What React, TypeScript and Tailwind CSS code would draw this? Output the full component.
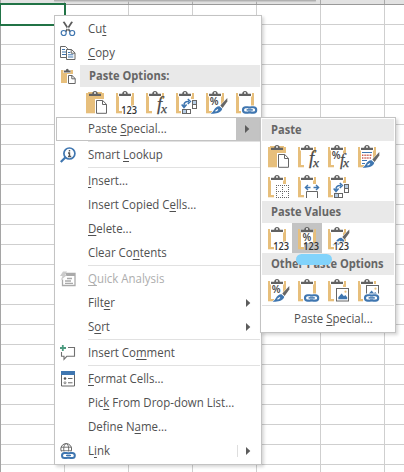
import type { ReactNode } from "react";

type Kind =
  | "paste" | "values" | "formula" | "transpose" | "format" | "link"
  | "formulaNumber" | "sourceFormat" | "noBorders" | "widths"
  | "valuesNumber" | "valuesFormat" | "picture" | "linkedPicture";

const SANS = "font-['Open_Sans','Noto_Sans',sans-serif]";

function Brush({ up = false }: { up?: boolean }) {
  return (
    <g transform={up ? "translate(0 -4.5)" : undefined}>
      <path d="M27.3 11L20.3 18.6L22.6 20.9L27.3 14.5Z" fill="#666" stroke="#fff" strokeWidth="1" paintOrder="stroke" />
      <path d="M19.5 19.2L22.3 21.8C21 26 16 27.2 10.5 26.5C13.5 25 14 22 16 20.5C17.2 19.4 18.5 19 19.5 19.2Z" fill="#3f76b0" stroke="#fff" strokeWidth="1" paintOrder="stroke" />
      <path d="M15.5 24.3l2.5-1.8" stroke="#fff" strokeWidth="1.1" />
    </g>
  );
}

function Chain() {
  return (
    <g fill="none">
      <path d="M11 18.5h17v8.5h-17z" fill="#fff" />
      <rect x="13" y="20.2" width="7.5" height="5.4" rx="2.7" stroke="#3f76b0" strokeWidth="2.1" />
      <rect x="18.8" y="20.2" width="7.4" height="5.4" rx="2.7" stroke="#3f76b0" strokeWidth="2.1" />
      <path d="M16.8 22.9h5.8" stroke="#fff" strokeWidth="2.6" />
      <path d="M16.6 22.9h6.2" stroke="#3f76b0" strokeWidth="1.5" />
    </g>
  );
}

function Numbers() {
  return (
    <text x="11.2" y="26.7" fontSize="9.8" fontWeight="600" fill="#333" stroke="#fff" strokeWidth="1.6" paintOrder="stroke" textLength="15.8" lengthAdjust="spacingAndGlyphs" className={SANS}>123</text>
  );
}

function Percent({ x = 9.8, y = 18.2 }: { x?: number; y?: number }) {
  return <text x={x} y={y} fontSize="10.5" fontWeight="600" fill="#444" textLength="8.8" lengthAdjust="spacingAndGlyphs" className={SANS}>%</text>;
}

function Fx({ small = false }: { small?: boolean }) {
  return (
    <g fontStyle="italic" fill="#484848" stroke="#484848" strokeWidth=".25" className="font-['Liberation_Serif',serif]">
      <text x={small ? 18 : 17} y={small ? 23.5 : 22.8} fontSize={small ? 16 : 18.5}>f</text>
      <text x="21" y="26.3" fontSize="13.5">x</text>
    </g>
  );
}

function Picture({ small = false }: { small?: boolean }) {
  return (
    <g transform={small ? "translate(0 -3)" : undefined}>
      <path d="M13 12h15v15H13z" fill="#fff" />
      <rect x="14.5" y="13.5" width="12" height="12.5" fill="#fff" stroke="#666" />
      <path d="M16.3 24.2v-2l3.3-3.6 2.4 2.6 1.2-1.2 2 2.2v2z" fill="#3f76b0" />
      <circle cx="23.5" cy="16.7" r="1.1" fill="#e7bf7c" />
    </g>
  );
}

function Transpose() {
  return (
    <g>
      <path d="M11 12h16v15H11z" fill="#fff" />
      <g fill="#fff" stroke="#666">
        <rect x="22.5" y="13.5" width="4" height="4" fill="#b5cce4" /><rect x="22.5" y="17.5" width="4" height="4" />
        <rect x="12.5" y="22.5" width="4" height="4" fill="#b5cce4" /><rect x="16.5" y="22.5" width="4" height="4" />
      </g>
      <path d="M14 20v-1.7q0-3.8 4-3.8h1M11.7 17.5L14 20.5l2.6-3M17.8 12l2.6 2.5-2.6 2.5" fill="none" stroke="#3f76b0" strokeWidth="1.5" />
    </g>
  );
}

const overlays: Record<Kind, ReactNode> = {
  paste: <><path d="M15 12h13v15H15z" fill="#fff" /><path d="M16.5 13.5h6.2l3.8 3.8v9h-10zM22.5 13.5v4h4" fill="#fff" stroke="#666" /></>,
  values: <Numbers />,
  formula: <><path d="M15 12h12v15H15z" fill="#fff" /><Fx /></>,
  transpose: <Transpose />,
  format: <><Percent /><Brush /></>,
  link: <Chain />,
  formulaNumber: <><path d="M17 12h10v15H17z" fill="#fff" /><Percent x={9.8} y={17.7} /><Fx small /></>,
  sourceFormat: (
    <>
      <path d="M10 11.5h10M10 19.5h5M10 22.5h3" stroke="#3f76b0" />
      <path d="M10 14.2h10M10 17h9" stroke="#c8584d" strokeWidth="1.5" strokeDasharray="1 .6" />
      <Brush />
    </>
  ),
  noBorders: (
    <>
      <path d="M13 13h14v14H13z" fill="#fff" />
      <path d="M14.5 14v13M20.5 14v13M26.5 14v13M14 14.5h13M14 20.5h13M14 26.5h13" stroke="#666" strokeDasharray="1 1" />
    </>
  ),
  widths: (
    <>
      <path d="M12 13h15v14H12z" fill="#fff" />
      <path d="M13.5 16.5h5M21.5 16.5h5M16 14l-2.6 2.5L16 19M24 14l2.6 2.5L24 19" fill="none" stroke="#3f76b0" strokeWidth="1.4" />
      <path d="M14.5 27v-6.5h11V27" fill="none" stroke="#666" />
    </>
  ),
  valuesNumber: <><Percent x={10.6} y={18} /><text x="11.2" y="26.7" fontSize="9.8" fontWeight="600" fill="#333" textLength="15.8" lengthAdjust="spacingAndGlyphs" className={SANS}>123</text></>,
  valuesFormat: <><Brush up /><Numbers /></>,
  picture: <Picture />,
  linkedPicture: <><Picture small /><Chain /></>,
};

function PasteIcon({ kind, active = false }: { kind: Kind; active?: boolean }) {
  return (
    <button className={active ? "size-[30px] bg-[#c3c3c3]" : "size-[30px]"}>
      <svg width="30" height="30" viewBox="0 0 30 30" aria-label={kind}>
        <path d="M6 6h18v20.3H6z" fill="#e7bf7c" />
        {kind !== "paste" && <path d="M9 9h12v15H9z" fill="#fff" />}
        {kind !== "paste" && <path d="M12 20h13v7H12z" fill={active ? "#c3c3c3" : "#fff"} />}
        <path d="M8 5h14v4.5H8z" fill={kind === "paste" ? "#e7bf7c" : active ? "#c3c3c3" : "#fff"} />
        <path d="M9 9V6.8h3.2C12.4 5 13.4 4 15 4s2.6 1 2.8 2.8H21V9z" fill="#626262" />
        <circle cx="15" cy="6" r=".9" fill="#fff" />
        {overlays[kind]}
      </svg>
    </button>
  );
}

function Label({ text, bold = false }: { text: string; bold?: boolean }) {
  const parts = text.split("_");
  return (
    <span className={bold ? "inline-block origin-left scale-x-[0.925] whitespace-nowrap font-bold text-[#666]" : "inline-block origin-left scale-x-[0.955] whitespace-nowrap"}>
      {parts[0]}
      {parts.length > 1 && <><span className="underline decoration-1 underline-offset-2">{parts[1][0]}</span>{parts[1].slice(1)}</>}
    </span>
  );
}

const Arrow = () => <svg width="5" height="8" viewBox="0 0 5 8"><path d="M0 0l4.3 4L0 8z" fill="#5c5c5c" /></svg>;
const Separator = () => <div className="ml-[33px] h-[2px] border-t border-[#e1e1e1]" />;

function Item({ text, icon, arrow = false, split = false, disabled = false }: { text: string; icon?: ReactNode; arrow?: boolean; split?: boolean; disabled?: boolean }) {
  return (
    <div className={disabled ? "flex h-6 items-center text-[#adadad]" : "flex h-6 items-center"}>
      <div className="flex w-[33px] shrink-0 items-center pl-[5px]">{icon}</div>
      <Label text={text} />
      {arrow && (
        <div className="ml-auto flex h-full w-[23px] items-center">
          {split && <div className="h-3 w-px bg-[#dedede]" />}
          <div className={split ? "ml-[8px]" : "ml-[9px]"}><Arrow /></div>
        </div>
      )}
    </div>
  );
}

const icon = (children: ReactNode) => <svg width="16" height="16" viewBox="0 0 16 16" fill="none">{children}</svg>;

const cutIcon = icon(<>
  <path d="M2.7 1L4.5.5 10.8 10.3 9.3 11zM13 1L11.2.5 5 10.3 6.5 11z" fill="#5b5b5b" />
  <circle cx="3.7" cy="12" r="2.5" stroke="#3f76b0" strokeWidth="1.2" /><circle cx="12.2" cy="12" r="2.5" stroke="#3f76b0" strokeWidth="1.2" />
</>);
const copyIcon = icon(<>
  <path d="M.5 1.5h5l2.2 2.2v8.8H.5z" fill="#fff" stroke="#666" />
  <path d="M2 4.5h3M2 7h4M2 9.5h4" stroke="#3f76b0" />
  <path d="M6.5 4.5h5l3.5 3.4v6.6H6.5zM11.2 4.5v3.7H15" fill="#fff" stroke="#666" />
  <path d="M8 7.5h2.3M8 9.8h5.3M8 12h5.3" stroke="#3f76b0" />
</>);
const pasteIcon = icon(<>
  <path d="M1 2h12v13H1z" fill="#e7bf7c" /><path d="M3.5 1.5h7V5h-7z" fill="#fff" />
  <path d="M4 4.5v-2h1.8Q6 .8 7.3.8t1.5 1.7h1.7v2z" fill="#626262" />
  <path d="M7 6h9v10H7z" fill="#fff" />
  <path d="M8.5 7.5H12l3.2 3v5H8.5zM11.8 7.5v3.3h3.5" fill="#fff" stroke="#666" />
</>);
const lookupIcon = icon(<>
  <circle cx="9.4" cy="6.5" r="5.5" stroke="#3f76b0" strokeWidth="1.7" />
  <path d="M5.3 10.5L.8 15" stroke="#3f76b0" strokeWidth="2.2" />
  <path d="M9.5 3v1.5M8 6h1.5v3.5M8 9.5h3.2" stroke="#555" strokeWidth="1.4" />
</>);
const analysisIcon = icon(<>
  <path d="M4 2.5h11v12H2.5v-6" stroke="#aaa" strokeWidth="1.3" /><path d="M6 2.5h9V5H6z" fill="#aaa" />
  <path d="M3 .5h4L5 4h2L.5 9.5 2.5 5H0z" fill="#ccc" />
  <path d="M7 7.5h5M5 10h6M5 12.3h8" stroke="#aaa" strokeWidth="1.3" />
</>);
const commentIcon = icon(<>
  <path d="M8 2.5h6.5v8.8H6.8L4 14.3v-3H1.5V7" stroke="#707070" strokeWidth="1.1" />
  <path d="M2.8 0v6M0 3h6" stroke="#4d9b80" strokeWidth="1.8" />
</>);
const cellsIcon = icon(<>
  <path d="M1.5 1v14h13V1" fill="#fff" stroke="#666" /><path d="M1 0h14v4H1z" fill="#3f76b0" />
  <circle cx="5" cy="7.5" r="1.3" fill="#555" /><circle cx="5" cy="11.8" r="1" stroke="#666" strokeWidth=".8" />
  <path d="M8 7.5h4.5M8 11.8h4.5" stroke="#666" />
</>);
const linkIcon = icon(<>
  <circle cx="6.2" cy="6" r="5.4" stroke="#666" /><ellipse cx="6.2" cy="6" rx="2.5" ry="5.4" stroke="#666" strokeWidth=".9" />
  <path d="M1 4.2h10.4M1 7.8h10.4" stroke="#666" strokeWidth=".9" /><path d="M1 8.5h15V16H1z" fill="#fff" />
  <rect x="2" y="10" width="7" height="5" rx="2.5" stroke="#3f76b0" strokeWidth="2" /><rect x="7.8" y="10" width="7" height="5" rx="2.5" stroke="#3f76b0" strokeWidth="2" />
  <path d="M5.5 12.5h6" stroke="#fff" strokeWidth="2.4" /><path d="M6 12.5h5" stroke="#3f76b0" strokeWidth="1.3" />
</>);

function Header({ text }: { text: string }) {
  return <div className="flex h-[22px] items-center bg-[#e9e9e9] pl-[9px]"><Label text={text} bold /></div>;
}

function Sheet() {
  const columns = Array.from({ length: 7 }, (_, i) => i);
  const rows = Array.from({ length: 24 }, (_, i) => i);
  return (
    <div className="h-[472px] w-[470px] border-l border-[#a5a5a5]">
      <div className="flex h-[5px] border-b border-[#999] bg-[#e2e2e2]">
        {columns.map((c) => <div key={c} className="w-16 border-r border-[#aaa]" />)}
      </div>
      {rows.map((r) => (
        <div key={r} className="flex h-5 border-b border-[#cfcfcf]">
          {columns.map((c) => <div key={c} className="w-16 border-r border-[#cfcfcf]" />)}
        </div>
      ))}
    </div>
  );
}

export default function App() {
  return (
    <div className="relative h-[472px] w-[404px] overflow-hidden bg-white font-['Open_Sans','Noto_Sans',sans-serif] text-[12px] leading-4 text-[#505050]">
      <Sheet />
      <div className="absolute left-[54px] top-0 h-px w-[262px] bg-[#b0b0b0] shadow-[0_1px_1px_#c4c4c4]" />
      <div className="absolute -left-px top-[3px] h-[23px] w-[67px] border-2 border-[#217346]" />

      <div className="absolute left-[54px] top-[15px] h-[450px] w-[208px] border border-[#c3c3c3] bg-white p-px pr-[1px] shadow-[2px_2px_3px_rgba(0,0,0,0.16)]">
        <div className="-ml-px">
          <Item text="Cu_t" icon={cutIcon} />
          <Item text="_Copy" icon={copyIcon} />
          <div className="flex h-[22px] items-center">
            <div className="flex w-[25px] shrink-0 pl-[5px]">{pasteIcon}</div>
            <div className="flex-1"><Header text="Paste Options:" /></div>
          </div>
          <div className="ml-[25px] flex h-[30px]">
            {(["paste", "values", "formula", "transpose", "format", "link"] as Kind[]).map((k) => <PasteIcon key={k} kind={k} />)}
          </div>
          <div className="ml-px flex h-6 items-center border border-[#c3c3c3] pl-[31px]">
            <Label text="Paste _Special..." />
            <div className="ml-auto flex h-full w-[23px] items-center bg-[#c3c3c3] pl-[9px]"><Arrow /></div>
          </div>
          <Separator />
          <Item text="Smart _Lookup" icon={lookupIcon} />
          <Separator />
          <Item text="_Insert..." />
          <Item text="Insert Copied C_ells..." />
          <Item text="_Delete..." />
          <Item text="Clear Co_ntents" />
          <Separator />
          <Item text="_Quick Analysis" icon={analysisIcon} disabled />
          <Item text="Filt_er" arrow />
          <Item text="S_ort" arrow />
          <Separator />
          <Item text="Insert Co_mment" icon={commentIcon} />
          <Separator />
          <Item text="_Format Cells..." icon={cellsIcon} />
          <Item text="Pic_k From Drop-down List..." />
          <Item text="Define N_ame..." />
          <Item text="L_ink" icon={linkIcon} arrow split />
        </div>
      </div>

      <div className="absolute left-[260px] top-[117px] h-[216px] w-[136px] border border-[#c3c3c3] bg-white p-px shadow-[2px_2px_3px_rgba(0,0,0,0.16)]">
        <Header text="Paste" />
        <div className="flex flex-wrap">
          {(["paste", "formula", "formulaNumber", "sourceFormat", "noBorders", "widths", "transpose"] as Kind[]).map((k) => <PasteIcon key={k} kind={k} />)}
        </div>
        <Header text="Paste Values" />
        <div className="flex"><PasteIcon kind="values" /><PasteIcon kind="valuesNumber" active /><PasteIcon kind="valuesFormat" /></div>
        <Header text="Other Paste Options" />
        <div className="flex"><PasteIcon kind="format" /><PasteIcon kind="link" /><PasteIcon kind="picture" /><PasteIcon kind="linkedPicture" /></div>
        <div className="h-[2px] border-t border-[#e1e1e1]" />
        <div className="flex h-6 items-center pl-8"><Label text="Paste _Special..." /></div>
      </div>
      <div className="absolute left-[296px] top-[254px] h-[11px] w-9 rounded-full bg-[#82d3fb]" />
    </div>
  );
}
